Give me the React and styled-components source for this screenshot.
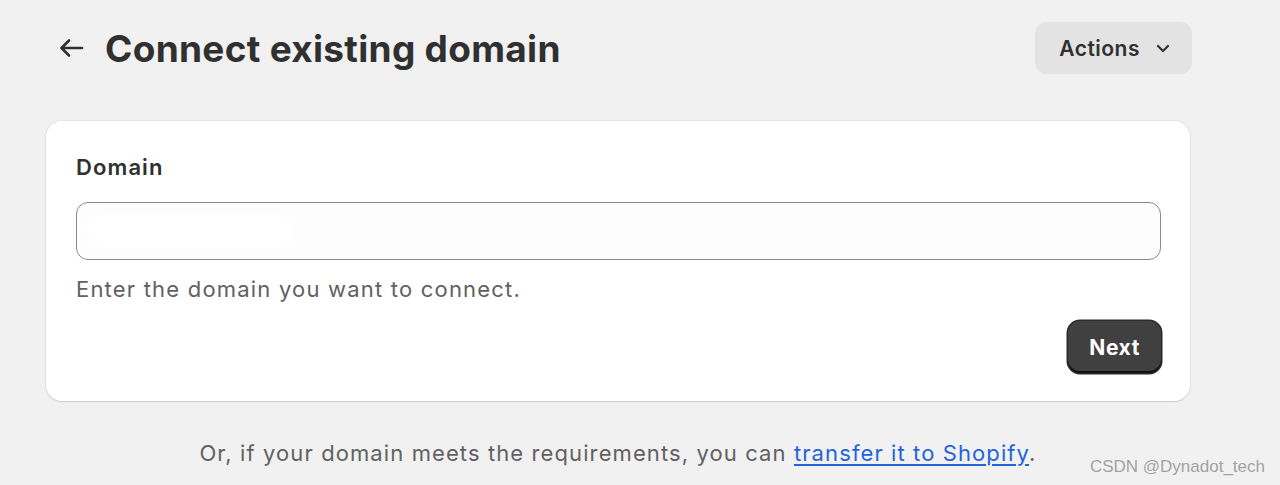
import React from "react";
import styled, { createGlobalStyle } from "styled-components";

const GlobalStyle = createGlobalStyle`
  html, body {
    margin: 0;
    padding: 0;
    background: #f1f1f1;
    font-family: Inter, "Noto Sans", "Liberation Sans", sans-serif;
  }
`;

const Screen = styled.div`
  position: relative;
  width: 1280px;
  height: 485px;
  overflow: hidden;
  background: #f1f1f1;
`;

const Page = styled.div`
  width: 1144px;
  padding: 22px 0 0 46px;
`;

const Header = styled.div`
  display: flex;
  align-items: center;
  height: 52px;
  padding-left: 12px;
  margin-right: -2px;
`;

const BackButton = styled.button`
  display: flex;
  align-items: center;
  justify-content: center;
  width: 26px;
  height: 26px;
  padding: 0;
  border: none;
  background: transparent;
  color: #303030;
  cursor: pointer;
`;

const Title = styled.h1`
  flex: 1;
  margin: 0 0 0 21px;
  font-size: 37px;
  font-weight: 700;
  letter-spacing: 0.3px;
  color: #303030;
`;

const ActionsButton = styled.button`
  display: flex;
  align-items: center;
  gap: 14px;
  height: 52px;
  padding: 0 20px 0 24px;
  border: none;
  border-radius: 12px;
  background: #e3e3e3;
  font-family: inherit;
  font-size: 21px;
  font-weight: 600;
  letter-spacing: 0.5px;
  color: #303030;
`;

const Card = styled.section`
  margin-top: 47px;
  padding: 32px 29px 28px 30px;
  background: #ffffff;
  border-radius: 16px;
  box-shadow: 0 1px 2px rgba(0, 0, 0, 0.12), 0 0 0 1px rgba(0, 0, 0, 0.04);
`;

const Label = styled.label`
  display: block;
  font-size: 22px;
  line-height: 28px;
  font-weight: 600;
  letter-spacing: 1.1px;
  color: #303030;
`;

const Field = styled.div`
  position: relative;
  margin-top: 21px;
  height: 58px;
  box-sizing: border-box;
  border: 1.5px solid #8a8a8a;
  border-radius: 12px;
  background: #fdfdfd;
`;

const Redacted = styled.div`
  position: absolute;
  left: 10px;
  top: 12px;
  width: 207px;
  height: 33px;
  border-radius: 16px;
  background: #ffffff;
  filter: blur(3px);
`;

const Help = styled.p`
  margin: 15px 0 0;
  font-size: 22px;
  line-height: 28px;
  letter-spacing: 1.2px;
  color: #616161;
`;

const Footer = styled.div`
  display: flex;
  justify-content: flex-end;
  margin-top: 18px;
`;

const NextButton = styled.button`
  height: 52px;
  padding: 0 21px;
  border: none;
  border-radius: 12px;
  background: #404040;
  box-shadow: inset 0 -2px 0 #111, 0 0 0 1.5px #2a2a2a;
  font-family: inherit;
  font-size: 21px;
  font-weight: 700;
  letter-spacing: 0.6px;
  color: #ffffff;
`;

const Note = styled.p`
  margin: 38px 0 0;
  text-align: center;
  font-size: 22px;
  line-height: 28px;
  letter-spacing: 1.1px;
  color: #616161;

  a {
    color: #2463d9;
    text-decoration: underline;
    text-underline-offset: 3px;
  }
`;

const Watermark = styled.div`
  position: absolute;
  right: 15px;
  bottom: 8px;
  font-family: "Liberation Sans", Arial, sans-serif;
  font-size: 17px;
  color: #a0a0a0;
  text-shadow: 0 0 1px #fff;
`;

function App() {
  return (
    <Screen>
      <GlobalStyle />
      <Page>
        <Header>
          <BackButton aria-label="Back">
            <svg width="26" height="26" viewBox="0 0 26 26" fill="none">
              <path
                d="M24 13H4M11 5.5L3.5 13l7.5 7.5"
                stroke="currentColor"
                strokeWidth="2.6"
                strokeLinecap="round"
                strokeLinejoin="round"
              />
            </svg>
          </BackButton>
          <Title>Connect existing domain</Title>
          <ActionsButton>
            Actions
            <svg width="18" height="18" viewBox="0 0 18 18" fill="none">
              <path
                d="M4 7l5 5 5-5"
                stroke="currentColor"
                strokeWidth="2.2"
                strokeLinecap="round"
                strokeLinejoin="round"
              />
            </svg>
          </ActionsButton>
        </Header>

        <Card>
          <Label>Domain</Label>
          <Field>
            <Redacted />
          </Field>
          <Help>Enter the domain you want to connect.</Help>
          <Footer>
            <NextButton>Next</NextButton>
          </Footer>
        </Card>

        <Note>
          Or, if your domain meets the requirements, you can{" "}
          <a href="#transfer">transfer it to Shopify</a>.
        </Note>
      </Page>
      <Watermark>CSDN @Dynadot_tech</Watermark>
    </Screen>
  );
}

export default App;
